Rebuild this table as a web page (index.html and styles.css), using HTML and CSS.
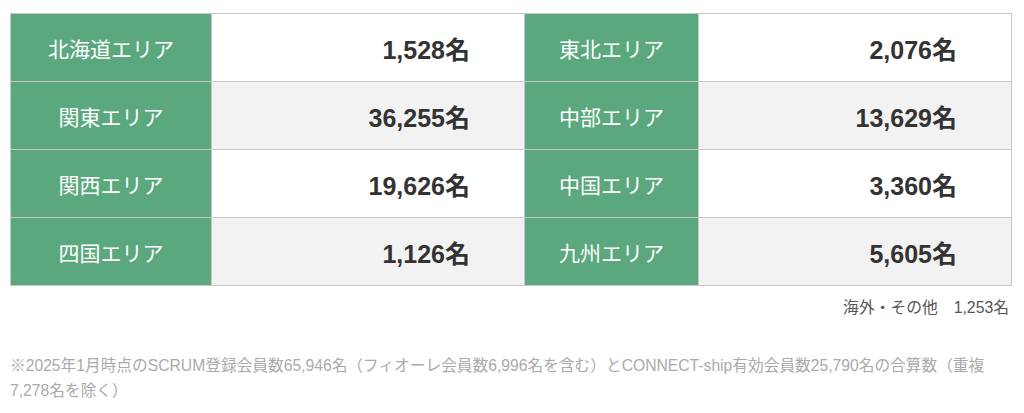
FILE: index.html
```html
<!DOCTYPE html>
<html lang="ja">
<head>
<meta charset="utf-8">
<link rel="stylesheet" href="styles.css">
</head>
<body>
<div class="wrap">
  <table class="areas">
    <colgroup>
      <col class="c-label1">
      <col class="c-val">
      <col class="c-label2">
      <col class="c-val">
    </colgroup>
    <tbody>
      <tr>
        <th>北海道エリア</th><td>1,528名</td>
        <th>東北エリア</th><td>2,076名</td>
      </tr>
      <tr class="alt">
        <th>関東エリア</th><td>36,255名</td>
        <th>中部エリア</th><td>13,629名</td>
      </tr>
      <tr>
        <th>関西エリア</th><td>19,626名</td>
        <th>中国エリア</th><td>3,360名</td>
      </tr>
      <tr class="alt">
        <th>四国エリア</th><td>1,126名</td>
        <th>九州エリア</th><td>5,605名</td>
      </tr>
    </tbody>
  </table>
  <p class="other">海外・その他　1,253名</p>
  <p class="note">※2025年1月時点のSCRUM登録会員数65,946名（フィオーレ会員数6,996名を含む）とCONNECT-ship有効会員数25,790名の合算数（重複7,278名を除く）</p>
</div>
</body>
</html>
```

FILE: styles.css
```css
html, body {
  margin: 0;
  padding: 0;
  background: #ffffff;
}

body {
  font-family: "Liberation Sans", "Noto Sans CJK JP", sans-serif;
  color: #333333;
}

.wrap {
  width: 1000px;
  padding: 13px 0 0 10px;
}

.areas {
  width: 1001px;
  border-collapse: collapse;
  table-layout: fixed;
}

.c-label1 { width: 201px; }
.c-val { width: 313px; }
.c-label2 { width: 174px; }

.areas tr {
  height: 68px;
}

.areas th,
.areas td {
  border: 1px solid #c8c8c8;
  padding: 0;
  vertical-align: middle;
}

.areas th {
  background: #5ba87e;
  color: #ffffff;
  font-weight: normal;
  font-size: 21px;
  text-align: center;
}

.areas td {
  background: #ffffff;
  color: #333333;
  font-weight: bold;
  font-size: 25px;
  text-align: right;
  padding-right: 54px;
}

.areas tr.alt td {
  background: #f2f2f2;
}

.other {
  margin: 11px 0 0;
  padding-right: 1px;
  text-align: right;
  font-size: 15.8px;
  line-height: 22px;
  color: #555555;
}

.note {
  margin: 34px 0 0;
  font-size: 15.7px;
  line-height: 25px;
  color: #aaaaaa;
}
```
